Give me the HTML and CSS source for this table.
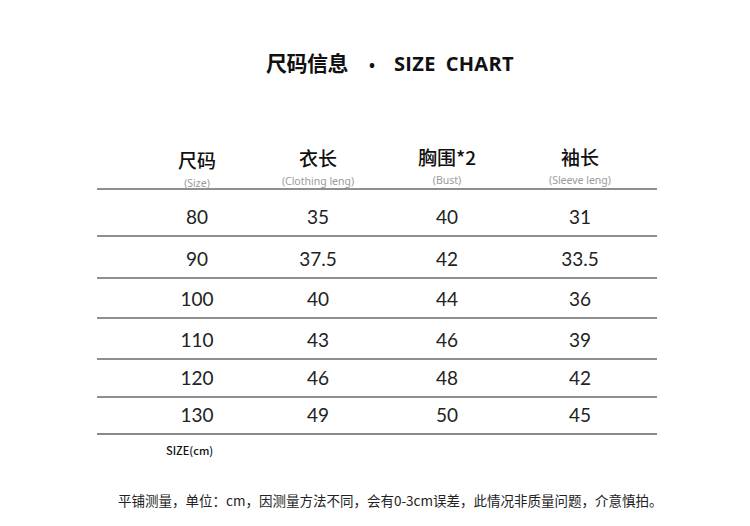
FILE: index.html
```html
<!DOCTYPE html>
<html lang="zh">
<head>
<meta charset="utf-8">
<link rel="stylesheet" href="styles.css">
</head>
<body>
<div class="page">
  <h1 class="title">
    <span class="title-cn">尺码信息</span>
    <span class="title-dot">•</span>
    <span class="title-en">SIZE</span>
    <span class="title-en">CHART</span>
  </h1>

  <div class="chart">
    <div class="row head">
      <div class="cell"><div class="label">尺码</div><div class="sub">(Size)</div></div>
      <div class="cell"><div class="label">衣长</div><div class="sub">(Clothing leng)</div></div>
      <div class="cell"><div class="label">胸围*2</div><div class="sub">(Bust)</div></div>
      <div class="cell"><div class="label">袖长</div><div class="sub">(Sleeve leng)</div></div>
    </div>
    <div class="row r1"><div class="cell">80</div><div class="cell">35</div><div class="cell">40</div><div class="cell">31</div></div>
    <div class="row r2"><div class="cell">90</div><div class="cell">37.5</div><div class="cell">42</div><div class="cell">33.5</div></div>
    <div class="row r3"><div class="cell">100</div><div class="cell">40</div><div class="cell">44</div><div class="cell">36</div></div>
    <div class="row r4"><div class="cell">110</div><div class="cell">43</div><div class="cell">46</div><div class="cell">39</div></div>
    <div class="row r5"><div class="cell">120</div><div class="cell">46</div><div class="cell">48</div><div class="cell">42</div></div>
    <div class="row r6"><div class="cell">130</div><div class="cell">49</div><div class="cell">50</div><div class="cell">45</div></div>
  </div>

  <div class="unit">SIZE(cm)</div>

  <p class="note">平铺测量，单位：cm，因测量方法不同，会有0-3cm误差，此情况非质量问题，介意慎拍。</p>
</div>
</body>
</html>
```

FILE: styles.css
```css
html, body {
  margin: 0;
  padding: 0;
  background: #ffffff;
}

.page {
  width: 750px;
  height: 526px;
  overflow: hidden;
  font-family: "Noto Sans CJK SC", "Noto Sans", sans-serif;
  color: #1a1a1a;
}

.title {
  margin: 0;
  height: 146px;
  box-sizing: border-box;
  padding: 48px 0 0 266px;
  display: flex;
  align-items: baseline;
  font-size: 21px;
  line-height: 28px;
  font-weight: 700;
  color: #111;
}

.title .title-cn {
  font-family: "Noto Sans CJK SC", sans-serif;
  letter-spacing: -0.5px;
}

.title-dot {
  margin-left: 21px;
  font-family: "Open Sans", sans-serif;
  font-size: 16px;
}

.title-en {
  font-family: "Open Sans", sans-serif;
  font-size: 20px;
  margin-left: 19px;
  letter-spacing: 0.3px;
}

.title-en + .title-en {
  margin-left: 10px;
}

.chart {
  margin-left: 97px;
  width: 560px;
}

.row {
  display: grid;
  grid-template-columns: 120px 122px 136px 130px;
  padding: 0 12px 0 40px;
  align-items: end;
  box-sizing: border-box;
  border-bottom: 2px solid #8f8f8f;
  padding-bottom: 8px;
  font-family: "Lato", "Noto Sans", sans-serif;
  font-size: 19px;
  line-height: 20px;
  color: #222;
}

.cell {
  text-align: center;
}

.row.head {
  height: 44px;
  padding-bottom: 0;
  align-items: start;
}

.label {
  font-family: "Noto Sans CJK SC", sans-serif;
  font-weight: 500;
  font-size: 19px;
  line-height: 24px;
  color: #111;
}

.head .cell:nth-child(1) .label { margin-top: 2px; }
.head .cell:nth-child(3) .label,
.head .cell:nth-child(4) .label { margin-top: -1px; }

.sub {
  margin-top: 4px;
  font-family: "Noto Sans", sans-serif;
  font-size: 10.5px;
  line-height: 14px;
  color: #9a9a9a;
}

.r1 { height: 47px; }
.r2 { height: 42px; }
.r3 { height: 40px; }
.r4 { height: 41px; }
.r5 { height: 38px; }
.r6 { height: 37px; border-bottom-color: #8a8a8a; }

.unit {
  margin: 8px 0 0 166px;
  font-family: "Noto Sans CJK SC", sans-serif;
  font-weight: 500;
  font-size: 11px;
  line-height: 14px;
  color: #111;
}

.note {
  margin: 34px 0 0 118px;
  font-family: "Noto Sans CJK SC", sans-serif;
  font-size: 13.5px;
  line-height: 18px;
  color: #222;
  white-space: nowrap;
}
```
